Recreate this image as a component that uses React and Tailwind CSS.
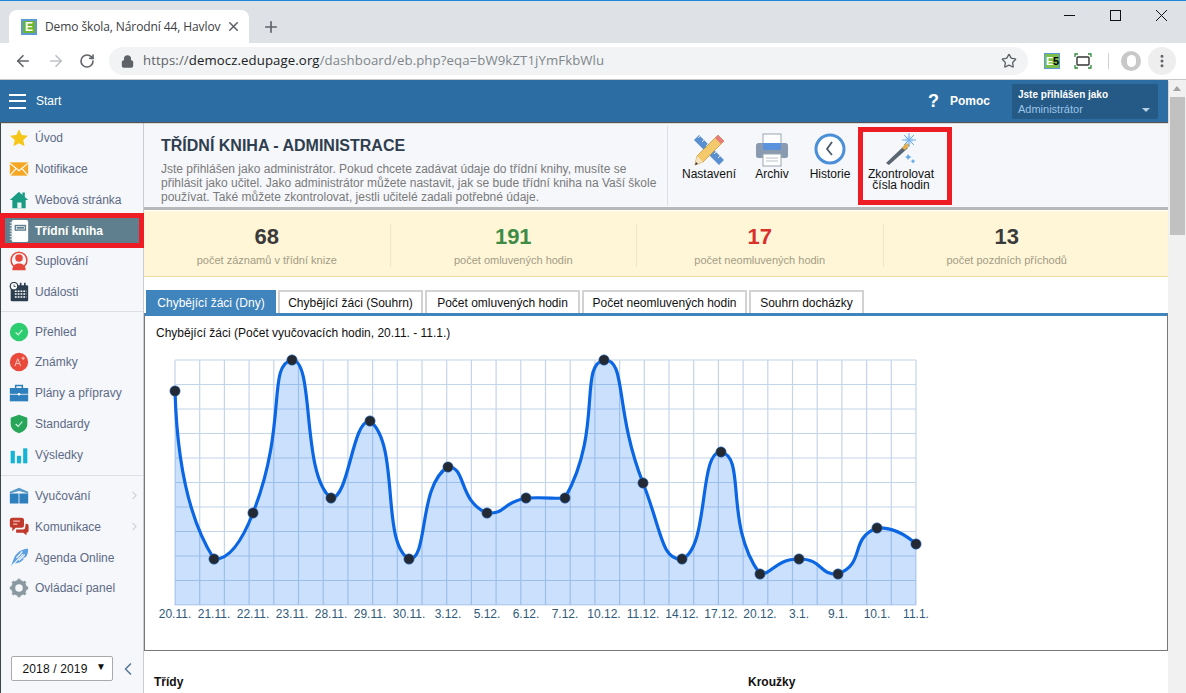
import React from "react";
import { ArrowLeft, ArrowRight, RotateCw, Lock, Star, X, Plus, ChevronRight, ChevronLeft, MoreVertical } from "lucide-react";

const pts = [391,559,513,360,498,421,559,467,513,498,498,360,483,559,452,574,559,574,528,544].map((y,i)=>[175+39*i,y]);
const labels = ["20.11.","21.11.","22.11.","23.11.","28.11.","29.11.","30.11.","3.12.","5.12.","6.12.","7.12.","10.12.","11.12.","14.12.","17.12.","20.12.","3.1.","9.1.","10.1.","11.1."];

function splinePath(p, t = 0.5) {
  const cps = [];
  for (let i = 1; i < p.length - 1; i++) {
    const [x0,y0]=p[i-1],[x1,y1]=p[i],[x2,y2]=p[i+1];
    const d01=Math.hypot(x1-x0,y1-y0), d12=Math.hypot(x2-x1,y2-y1);
    const fa=t*d01/(d01+d12), fb=t-fa;
    let ya=y1-fa*(y2-y0), yb=y1+fb*(y2-y0);
    if (y1>=y0&&y1>=y2){ya=Math.min(ya,y1+1);yb=Math.min(yb,y1+1);}
    if (y1<=y0&&y1<=y2){ya=Math.max(ya,y1-1);yb=Math.max(yb,y1-1);}
    cps.push([[x1-fa*(x2-x0),ya],[x1+fb*(x2-x0),yb]]);
  }
  let d=`M${p[0][0]} ${p[0][1]} Q${cps[0][0][0]} ${cps[0][0][1]} ${p[1][0]} ${p[1][1]}`;
  for (let i=1;i<p.length-2;i++){
    d+=` C${cps[i-1][1][0]} ${cps[i-1][1][1]} ${cps[i][0][0]} ${cps[i][0][1]} ${p[i+1][0]} ${p[i+1][1]}`;
  }
  const l=cps[cps.length-1][1], e=p[p.length-1];
  d+=` Q${l[0]} ${l[1]} ${e[0]} ${e[1]}`;
  return d;
}

const Chart = () => {
  const d = splinePath(pts, 0.62);
  const vs = Array.from({length:31},(_,i)=>175+i*24.7);
  const hs = Array.from({length:11},(_,i)=>360+i*24.5);
  return (
    <svg viewBox="165 350 780 262" className="block w-[780px] h-[262px] ml-[20px] mt-[10px]">
      {vs.map(x=><line key={x} x1={x} x2={x} y1={360} y2={605} stroke="#c3d5ea" strokeWidth="1.2"/>)}
      {hs.map(y=><line key={y} x1={175} x2={916} y1={y} y2={y} stroke="#c3d5ea" strokeWidth="1.2"/>)}
      <path d={`${d} L916 605 L175 605 Z`} fill="#0a6cf0" fillOpacity="0.21"/>
      <path d={d} fill="none" stroke="#0b66e4" strokeWidth="3.2"/>
      {pts.map(([x,y])=><circle key={x} cx={x} cy={y} r="5.2" fill="#232a33" stroke="#2f77d8" strokeOpacity="0.55" strokeWidth="1"/>)}
    </svg>
  );
};

const I = ({children,s=20,v=24}) => <svg width={s} height={s} viewBox={`0 0 ${v} ${v}`} className="block">{children}</svg>;

const icons = {
  star:<I><path d="M12 1.5l3.2 7 7.6.8-5.7 5.1 1.6 7.6L12 18.2 5.300 22l1.600-7.600L1.200 9.300l7.600-.8z" fill="#f5c518"/></I>,
  mail:<I><rect x="1" y="4" width="22" height="16" fill="#f5a623"/><path d="M1 5l11 9 11-9M1 20l8-9M23 20l-8-9" fill="none" stroke="#fff" strokeWidth="1.4"/></I>,
  home:<I><path d="M12 2L1 12h3v10h16V12h3l-4-3.600V3h-3v3z" fill="#1a9c84"/><rect x="10" y="15" width="5" height="7" fill="#eaf6f3"/></I>,
  book:<I s={22}><rect x="4" y="0" width="18" height="24" rx="2" fill="#fff"/><rect x="8" y="6" width="11" height="5" fill="#fff" stroke="#5f7f8e" strokeWidth="1.5"/><rect x="9.500" y="7.500" width="8" height="2" fill="#5f7f8e"/><path d="M2 3h4M2 6h4M2 9h4M2 12h4M2 15h4M2 18h4M2 21h4" stroke="#e8edf0" strokeWidth="1"/></I>,
  sub:<I><circle cx="12" cy="11" r="9.500" fill="none" stroke="#e8463a" strokeWidth="1.800"/><circle cx="12" cy="8.500" r="4.500" fill="#e8463a"/><path d="M4 23c0-6 4-8 8-8s8 2 8 8z" fill="#e8463a"/></I>,
  cal:<I><rect x="2" y="4" width="21" height="19" rx="1.500" fill="#2c3e50"/><circle cx="6" cy="5" r="4.500" fill="#fff" stroke="#2c3e50" strokeWidth="1.500"/><path d="M6 3v2.500h2" stroke="#2c3e50" fill="none"/><rect x="13" y="1" width="2" height="4" fill="#2c3e50"/><rect x="18" y="1" width="2" height="4" fill="#2c3e50"/><path d="M7 11h14M7 14.500h14M7 18h14" stroke="#fff" strokeWidth="1.800" strokeDasharray="2.200 1.200"/></I>,
  check:<I><circle cx="12" cy="12" r="11" fill="#2ecc71"/><path d="M8 12.500l3 3 5-6" fill="none" stroke="#d8f7e4" strokeWidth="1.500"/></I>,
  grade:<I><circle cx="12" cy="12" r="11" fill="#ea4a3c"/><path d="M7 17l3.500-9L14 17M8.500 14h4M15 7.500h4M17 5.500v4" fill="none" stroke="#f8c8c2" strokeWidth="1.200"/></I>,
  case:<I><path d="M8 6V3h8v3" fill="none" stroke="#2e7fbd" strokeWidth="1.800"/><rect x="1" y="6" width="22" height="7" fill="#2e7fbd"/><rect x="1" y="14" width="22" height="8" fill="#2e7fbd"/><circle cx="12" cy="13.500" r="1.500" fill="#fff"/></I>,
  shield:<I><path d="M12 1l10 3.500V12c0 6-5 9.500-10 11C7 21.500 2 18 2 12V4.500z" fill="#27a558"/><path d="M8 12l3 3 5-6" fill="none" stroke="#d8f7e4" strokeWidth="1.400"/></I>,
  bars:<I><rect x="2" y="7" width="5" height="15" fill="#12b5d6"/><rect x="9.500" y="13" width="5" height="9" fill="#12b5d6"/><rect x="17" y="4" width="5" height="18" fill="#12b5d6"/></I>,
  teach:<I><path d="M1 7l11-5 11 5v2L12 6 1 9z" fill="#5a9ac8"/><rect x="1" y="9" width="10.500" height="12" fill="#2e7fbd"/><rect x="12.500" y="9" width="10.500" height="12" fill="#2e7fbd"/></I>,
  chat:<I><path d="M4 1h11a3 3 0 013 3v6a3 3 0 01-3 3H8l-4 4v-4a3 3 0 01-3-3V4a3 3 0 013-3z" fill="#c0392b"/><path d="M5 5h8M5 8.500h5" stroke="#f3c0ba" strokeWidth="1.500"/><path d="M20 8h1a2.500 2.500 0 012.500 2.500v6A2.500 2.500 0 0121 19v3l-4-3h-7a3 3 0 01-1.500-.5V15h8a3 3 0 003-3z" fill="#c0392b"/></I>,
  feather:<I><path d="M2 23L6 12C10 4 17 1 23 1c0 5-1 8-3 10l-4 1 2 1c-3 4-7 6-12 5z" fill="#5b9fe0"/><path d="M2 23L17 7M9 12l7-8M12 15l7-7" stroke="#f5f7fa" strokeWidth="1.400"/></I>,
  gear:<I><circle cx="12" cy="12" r="7" fill="none" stroke="#8a9aa0" strokeWidth="5"/><path d="M12 1v5M12 18v5M1 12h5M18 12h5M4.200 4.200l3.500 3.500M16.300 16.300l3.500 3.500M4.200 19.800l3.500-3.500M16.300 7.700l3.500-3.500" stroke="#8a9aa0" strokeWidth="3.400"/></I>,
};

const Item = ({icon,label,chev}) => (
  <div className="h-[30.7px] flex items-center relative shrink-0">
    <div className="w-[34px] pl-[8px] shrink-0">{icons[icon]}</div>
    <span className="text-[12px] text-[#5d6a86]">{label}</span>
    {chev && <ChevronRight className="absolute left-[127px] top-[8px] text-[#d0d4d8]" size={13}/>}
  </div>
);

const Tool = ({w,label,children}) => (
  <div style={{width:w}} className="flex flex-col items-center text-[12px] leading-[11px] text-[#111] text-center shrink-0">
    <div className="h-[42px] pt-[11px]">{children}</div>
    <div className="mt-[5px]">{label}</div>
  </div>
);

const Stat = ({n,l,c,last}) => (
  <div className={`w-[246.500px] h-[43px] flex flex-col items-center ${last?"":"border-r border-[#f1e6c3]"}`}>
    <div className={`text-[22px] font-bold leading-[25px] ${c}`}>{n}</div>
    <div className="text-[11px] leading-[14px] mt-[4px] text-[#a39c85]">{l}</div>
  </div>
);

const Tab = ({w,label,active}) => (
  <div style={{width:w}} className={`h-[23px] flex items-center justify-center text-[12px] border-2 border-b-0 shrink-0 ${active?"bg-[#3f84bc] border-[#3f84bc] text-white":"bg-white border-[#d2d2d2] text-[#111]"}`}>{label}</div>
);

export default function App() {
  return (
    <div className="w-[1186px] h-[693px] overflow-hidden flex flex-col bg-white font-['Liberation_Sans',Arial,sans-serif]">
      {/* tab strip */}
      <div className="h-[43px] shrink-0 bg-[#dee1e6] border-t border-[#1b87d8] flex items-end relative font-['Open_Sans',sans-serif]">
        <div className="ml-[9px] w-[240px] h-[33px] bg-white rounded-t-[8px] flex items-center relative">
          <div className="ml-[12px] w-[16px] h-[16px] border-2 border-[#5b9ad6] bg-[#6cb52d] flex items-center justify-center text-white text-[12px] leading-none font-bold font-['Liberation_Sans']">E</div>
          <span className="ml-[8px] text-[12px] tracking-[-0.1px] text-[#3c4043] whitespace-nowrap">Demo škola, Národní 44, Havlov</span>
          <X className="absolute left-[217px] top-[9px] text-[#5f6368]" size={15} strokeWidth={2.500}/>
        </div>
        <Plus className="ml-[13px] mb-[7px] text-[#5f6368]" size={18} strokeWidth={2.200}/>
        <div className="ml-auto self-start mt-[9px] flex items-center pr-[19px]">
          <svg width="11" height="11" viewBox="0 0 11 11"><path d="M0 5.500h11" stroke="#111" strokeWidth="1"/></svg>
          <div className="ml-[35px] w-[11px] h-[11px] border border-[#111]"/>
          <svg width="11" height="11" viewBox="0 0 11 11" className="ml-[35px]"><path d="M0 0l11 11M11 0L0 11" stroke="#111" strokeWidth="1"/></svg>
        </div>
      </div>
      {/* toolbar */}
      <div className="h-[37px] shrink-0 bg-white border-b border-[#c8c8c8] flex items-center">
        <ArrowLeft className="ml-[14px] text-[#5f6368]" size={18} strokeWidth={2.200}/>
        <ArrowRight className="ml-[15px] text-[#bdc1c6]" size={18} strokeWidth={2.200}/>
        <RotateCw className="ml-[14px] text-[#5f6368]" size={16} strokeWidth={2.400}/>
        <div className="ml-[14px] w-[919px] h-[28px] rounded-full bg-[#f1f3f4] flex items-center relative">
          <Lock className="ml-[12px] text-[#5f6368]" size={13} strokeWidth={3} fill="#5f6368"/>
          <span className="ml-[9px] text-[13.200px] tracking-[0.1px] whitespace-nowrap font-['Open_Sans',sans-serif]"><span className="text-[#5f6368]">https://</span><span className="text-[#202124]">democz.edupage.org</span><span className="text-[#80868b]">/dashboard/eb.php?eqa=bW9kZT1jYmFkbWlu</span></span>
          <Star className="absolute right-[11px] top-[6px] text-[#5f6368]" size={16} strokeWidth={2}/>
        </div>
        <div className="ml-[16px] w-[16px] h-[16px] border border-[#5b9ad6] bg-[#7cc04a] relative shrink-0 text-[11px] leading-[14px] font-bold"><span className="absolute left-[1px] top-0 text-white">E</span><span className="absolute right-0 top-0 text-black">5</span></div>
        <svg width="18" height="16" viewBox="0 0 18 16" className="ml-[14px] shrink-0"><path d="M1 4V1h3M14 1h3v3M17 12v3h-3M4 15H1v-3" fill="none" stroke="#2e8b3a" strokeWidth="1.300"/><rect x="3" y="4" width="12" height="8" rx="1" fill="none" stroke="#333" strokeWidth="1.400"/></svg>
        <div className="ml-[16px] w-px h-[16px] bg-[#d0d0d0]"/>
        <div className="ml-[12px] w-[20px] h-[20px] rounded-full bg-[#c8c8c8] flex items-center justify-center shrink-0"><div className="w-[9px] h-[12px] rounded-full bg-white"/></div>
        <div className="ml-[7px] w-[28px] h-[28px] rounded-full bg-[#eeeeee] flex items-center justify-center shrink-0"><MoreVertical className="text-[#5f6368]" size={16} strokeWidth={2.500}/></div>
      </div>
      {/* page */}
      <div className="flex-1 flex min-h-0">
        <div className="w-[1168px] flex flex-col min-h-0">
          <header className="h-[42px] shrink-0 bg-[#2c6ea3] flex items-center text-white shadow-[0_1px_1px_#555] relative z-10">
            <div className="ml-[9px] w-[17px] flex flex-col gap-[4.500px]"><i className="block h-[2px] bg-white"/><i className="block h-[2px] bg-white"/><i className="block h-[2px] bg-white"/></div>
            <span className="ml-[10px] text-[12px]">Start</span>
            <span className="ml-auto text-[18px] font-bold leading-none">?</span>
            <span className="ml-[11px] text-[12px] font-bold">Pomoc</span>
            <div className="ml-[22px] mr-[10px] w-[146px] h-[35px] bg-[#245a85] rounded-[2px] px-[6px] relative">
              <div className="text-[10px] font-bold leading-[12px] mt-[5px]">Jste přihlášen jako</div>
              <div className="text-[11px] leading-[12px] mt-[2px] text-[#9cc4e8]">Administrátor</div>
              <div className="absolute right-[8px] bottom-[7px] w-0 h-0 border-x-[4px] border-x-transparent border-t-[4px] border-t-[#b8cfe0]"/>
            </div>
          </header>
          <div className="flex-1 flex min-h-0">
            {/* sidebar */}
            <aside className="w-[144px] shrink-0 bg-[#f5f7fa] border-r border-l border-r-[#c8ccd0] border-l-[#3a4548] flex flex-col pt-px">
              <Item icon="star" label="Úvod"/>
              <Item icon="mail" label="Notifikace"/>
              <Item icon="home" label="Webová stránka"/>
              <div className="h-[35px] -my-[2px] -mx-px shrink-0 border-[5px] border-[#ee1c25] bg-[#5f7f8e] flex items-center text-white relative">
                <div className="w-[30px] pl-[3px] shrink-0">{icons.book}</div>
                <span className="text-[12px] font-bold">Třídní kniha</span>
              </div>
              <Item icon="sub" label="Suplování"/>
              <Item icon="cal" label="Události"/>
              <div className="h-px bg-[#dcdfe3] my-[4px] shrink-0"/>
              <Item icon="check" label="Přehled"/>
              <Item icon="grade" label="Známky"/>
              <Item icon="case" label="Plány a přípravy"/>
              <Item icon="shield" label="Standardy"/>
              <Item icon="bars" label="Výsledky"/>
              <div className="h-px bg-[#dcdfe3] my-[5px] shrink-0"/>
              <Item icon="teach" label="Vyučování" chev/>
              <Item icon="chat" label="Komunikace" chev/>
              <Item icon="feather" label="Agenda Online"/>
              <Item icon="gear" label="Ovládací panel"/>
              <div className="mt-auto mb-[12px] flex items-center">
                <div className="ml-[10px] w-[102px] h-[25px] border border-[#aaa] rounded-[2px] bg-white flex items-center justify-center text-[12px] text-[#111] relative pr-[14px] tracking-[0.15px]">2018 / 2019<span className="absolute right-[6px] top-[2px] text-[10px]">▼</span></div>
                <ChevronLeft className="ml-[5px] text-[#5a7a98]" size={20} strokeWidth={2}/>
              </div>
            </aside>
            {/* main */}
            <main className="flex-1 min-w-0 overflow-hidden">
              <div className="h-[88px] bg-[#f5f7fa] border-b-[3px] border-[#b8b8b8] flex">
                <div className="w-[524px] shrink-0 border-r border-[#dde0e4] h-[80px] mt-[4px] pl-[17px]">
                  <h1 className="text-[16px] font-bold leading-[18px] text-[#2f3e4e] mt-[11px]">TŘÍDNÍ KNIHA - ADMINISTRACE</h1>
                  <p className="text-[12px] leading-[14px] text-[#7a7a7a] mt-[7px] whitespace-nowrap">Jste přihlášen jako administrátor. Pokud chcete zadávat údaje do třídní knihy, musíte se<br/>přihlásit jako učitel. Jako administrátor můžete nastavit, jak se bude třídní kniha na Vaší škole<br/>používat. Také můžete zkontrolovat, jestli učitelé zadali potřebné údaje.</p>
                </div>
                <div className="flex ml-[8px]">
                  <Tool w={66} label="Nastavení"><svg width="34" height="34" viewBox="0 0 34 34"><path d="M2 7l5-5 25 25-5 5z" fill="#5a8fd0"/><path d="M8 3l-2 2M12 7l-2 2M16 11l-2 2M20 15l-2 2M24 19l-2 2M28 23l-2 2" stroke="#d7e6f7" strokeWidth="1"/><path d="M26 2l6 6L11 29l-8 3 2-9z" fill="#f3c96b" stroke="#c79b3c" strokeWidth=".8"/><path d="M26 2l6 6-3 3-6-6z" fill="#e77c7c"/><path d="M5 23l6 6-8 3z" fill="#f6e3c0"/><path d="M3 32l3-1-2-2z" fill="#333"/></svg></Tool>
                  <Tool w={60} label="Archiv"><svg width="34" height="34" viewBox="0 0 34 34"><rect x="8" y="1" width="18" height="12" fill="#fff" stroke="#9aa5b1"/><rect x="1" y="10" width="32" height="15" rx="2.500" fill="#8a9bb0"/><rect x="8" y="10" width="18" height="7" fill="#5b93dd"/><rect x="8" y="21" width="18" height="12" fill="#fff" stroke="#9aa5b1"/><path d="M11 25h12M11 28h12" stroke="#b8c0c8"/></svg></Tool>
                  <Tool w={56} label="Historie"><svg width="32" height="32" viewBox="0 0 32 32"><circle cx="16" cy="16" r="14" fill="#fff" stroke="#4a8fd8" strokeWidth="3"/><path d="M18 9l-5 7 5 6" fill="none" stroke="#4a5a6a" strokeWidth="1.800"/></svg></Tool>
                  <div className="w-[94px] h-[78px] mt-[5px] pr-[8px] border-[5px] border-[#ee1c25] flex flex-col items-center text-[12px] leading-[11px] text-[#111] text-center shrink-0">
                    <svg width="34" height="32" viewBox="0 0 34 32" className="mt-px"><path d="M2 30l19-18 3 3L5 32z" fill="#5a6672"/><path d="M18 15l5-6 3 3-5 5z" fill="#e3b04b"/><circle cx="25" cy="7" r="4" fill="#cfe6fb"/><path d="M25 0v14M18 7h14M20 2l10 10M30 2L20 12" stroke="#6aa9e8" strokeWidth="1"/><path d="M24 21l1.500 2 2 1-2 1-1.500 2-1-2-2-1 2-1zM29 26l1 1.500 1.500.5-1.500 1-1 1.500-1-1.500-1.500-1 1.500-.5z" fill="#6aa9e8"/></svg>
                    <div className="mt-[4px] whitespace-nowrap">Zkontrolovat<br/>čísla hodin</div>
                  </div>
                </div>
              </div>
              <div className="mt-[1px] h-[66px] bg-[#fff6d8] border-b border-[#f0dba0] flex pt-[13px]">
                <Stat n="68" l="počet záznamů v třídní knize" c="text-[#3a3a3a]"/>
                <Stat n="191" l="počet omluvených hodin" c="text-[#3d8b45]"/>
                <Stat n="17" l="počet neomluvených hodin" c="text-[#d9302c]"/>
                <Stat n="13" l="počet pozdních příchodů" c="text-[#3a3a3a]" last/>
              </div>
              <div className="mt-[13px] ml-[2px] flex gap-[2px]">
                <Tab w={130} label="Chybějící žáci (Dny)" active/>
                <Tab w={145} label="Chybějící žáci (Souhrn)"/>
                <Tab w={155} label="Počet omluvených hodin"/>
                <Tab w={165} label="Počet neomluvených hodin"/>
                <Tab w={115} label="Souhrn docházky"/>
              </div>
              <div className="h-[338px] border-t-[3px] border-t-[#3f84bc] border-x border-b border-x-[#777] border-b-[#777]">
                <div className="pl-[11px] pt-[10px] text-[12px] leading-[14px] text-[#111]">Chybějící žáci (Počet vyučovacích hodin, 20.11. - 11.1.)</div>
                <Chart/>
                <div className="flex ml-[10.500px] -mt-[5px]">
                  {labels.map(l=><div key={l} className="w-[39px] shrink-0 text-center text-[12px] leading-[14px] text-[#2f5a7a]">{l}</div>)}
                </div>
              </div>
              <div className="flex mt-[24px] text-[12px] font-bold text-[#111] leading-[14px]">
                <div className="ml-[10px] w-[594px]">Třídy</div>
                <div>Kroužky</div>
              </div>
            </main>
          </div>
        </div>
        {/* scrollbar */}
        <div className="w-[18px] bg-[#f1f1f1] flex flex-col items-center shrink-0">
          <div className="mt-[6px] w-0 h-0 border-x-[4px] border-x-transparent border-b-[5px] border-b-[#a3a3a3]"/>
          <div className="mt-[6px] w-[15px] h-[138px] bg-[#c1c1c1]"/>
        </div>
      </div>
    </div>
  );
}
